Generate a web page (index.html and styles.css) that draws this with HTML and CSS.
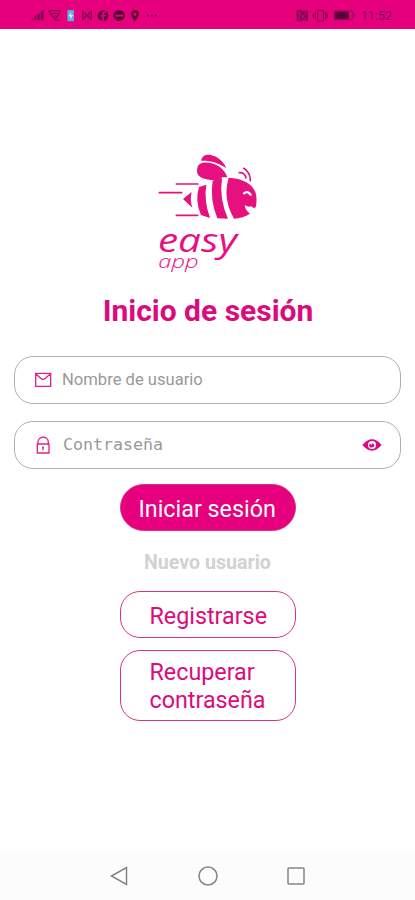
FILE: index.html
```html
<!DOCTYPE html>
<html lang="es">
<head>
<meta charset="utf-8">
<title>Inicio de sesión</title>
<link rel="stylesheet" href="styles.css">
</head>
<body>
<header class="status">
  <svg class="status-left" viewBox="90 20 390 50" width="130" height="16.667">
    <path d="M92 60l8-7v7zM102 60v-9l7-6v15zM112 60V43l7-6v23zM122 60V34l9-7v33z"/>
    <g fill="none" stroke="currentColor" stroke-width="3"><path d="M146 35q18-10 36 0M149 42q15-8 29 0M155 49q9-5 17 0M146 31h34l-15 29z M164 55l14-14M168 60h13"/></g>
    <rect class="battery-fill" x="202" y="29" width="20" height="34" rx="3"/><path class="bolt" d="M214 34l-9 14h7l-2 10 9-14h-7z"/>
    <path fill="none" stroke="currentColor" stroke-width="4" d="M248 60V33l13 13 13-13v27M248 59l13-15 13 15"/>
    <circle class="app-icon" cx="309" cy="46" r="16"/><path class="cut" d="M307 62V49h-6v-5h6v-4q0-8 11-7v5q-6-1-6 3v3h6l-1 5h-5v13z"/>
    <path class="app-icon" d="M358 30c-23 0-23 25-8 30l2 3 6-2c23 0 23-31 0-31z"/><path class="cut" d="M347 43h22v6h-22z"/>
    <path class="app-icon" fill-rule="evenodd" d="M405 29c-16 0-15 16 0 34 15-18 16-34 0-34zm0 8a5 5 0 1 1 0 10 5 5 0 0 1 0-10z"/>
    <g><circle cx="444" cy="46" r="3"/><circle cx="456" cy="46" r="3"/><circle cx="468" cy="46" r="3"/></g>
  </svg>
  <div class="status-right">
    <svg viewBox="273 20 180 50" width="60" height="16.667">
      <path d="M275 30l6-2h22l6 5v30h-8l-5-4-6 4h-15z"/><path fill="none" stroke="#e6007e" stroke-width="3" d="M282 60V34l11 18M290 31h12v11l-9 5 11 15"/>
      <path fill="none" stroke="currentColor" stroke-width="3.5" d="M338 30h17v32h-17zM331 34v24M362 34v24M325 40v12M367 40v12"/>
      <rect class="charge" x="390" y="34" width="42" height="22"/><path fill="none" stroke="currentColor" stroke-width="2.5" d="M388 32h54v26h-54zM448 38v13"/>
    </svg>
    <span class="time">11:52</span>
  </div>
</header>
<main class="login">
  <svg class="logo" viewBox="0 0 375 405" width="125" height="135" role="img" aria-label="easy app">
    <path d="M168 47C173 27 192 26 209 34C226 42 237 53 244 70C221 53 196 46 168 47Z"/>
    <path d="M156 76C157 52 176 49 200 55C222 60 240 76 247 97L231 97L222 109C193 103 155 105 156 76Z"/>
    <path d="M114 162L140 141Q134 165 142 188Z"/>
    <path d="M162 126L184 119Q176 166 195 219L168 210Q149 168 162 126Z"/>
    <path d="M203 107L231 100Q222 163 249 221L217 220Q194 164 203 107Z"/>
    <path d="M251 98C291 100 325 115 333 148Q336 165 333 185L327 190L319 184Q308 188 299 180Q301 196 315 206Q294 219 267 221Q232 160 251 98Z"/>
    <path class="smile" d="M297 145Q307 136 317 149"/>
    <path class="lines" d="M94 117H159M43 143H110M94 211H158"/>
    <path class="antenna" d="M283 83Q299 82 303 99M296 70Q316 82 316 107"/>
    <text class="word-easy" x="39" y="320" textLength="237" lengthAdjust="spacingAndGlyphs">easy</text>
    <text class="word-app" x="40" y="369" textLength="121" lengthAdjust="spacingAndGlyphs">app</text>
  </svg>
  <h1>Inicio de sesión</h1>
  <div class="field">
    <svg class="icon" viewBox="0 0 54 54" width="18" height="18"><path d="M5 7h45v39H5zM6 9l14 13q7 7 14 0L49 9"/></svg>
    <span class="hint">Nombre de usuario</span>
  </div>
  <div class="field">
    <svg class="icon" viewBox="0 0 54 54" width="18" height="18"><path d="M10 24h35v27H10zM12 24v-6c0-19 31-19 31 0v6M27 33v10M24 34h6"/></svg>
    <span class="hint mono">Contraseña</span>
    <svg class="eye" viewBox="0 0 60 36" width="20" height="12"><path d="M1 18Q30-16 59 18Q30 52 1 18Z"/><circle cx="30" cy="18" r="12"/><path d="M30 18L22 13V23Q30 29 37 21Q38 15 31 12Z"/></svg>
  </div>
  <button class="btn primary">Iniciar sesión</button>
  <p>Nuevo usuario</p>
  <button class="btn">Registrarse</button>
  <button class="btn recover">Recuperar<br>contraseña</button>
</main>
<nav>
  <svg viewBox="0 0 20 20" width="20" height="20"><path d="M1.5 10L16.5 1.5v17z"/></svg>
  <svg viewBox="0 0 20 20" width="20" height="20"><circle cx="10" cy="10" r="9"/></svg>
  <svg viewBox="0 0 20 20" width="20" height="20"><rect x="2" y="2" width="16" height="16" rx="1"/></svg>
</nav>
</body>
</html>
```
FILE: styles.css
```css
* { box-sizing: border-box; }
body { margin: 0; width: 415px; height: 900px; display: flex; flex-direction: column; background: #fff; font-family: Roboto, sans-serif; overflow: hidden; }
.status { height: 29px; flex: none; background: #e6007e; color: #850050; display: flex; justify-content: space-between; align-items: flex-start; padding: 6.667px 22px 0 30px; }
.status svg { fill: currentColor; display: block; }
.status .battery-fill { fill: #55aee0; }
.status .bolt { fill: #fff; }
.status .cut { fill: #e6007e; }
.status .charge, .status .app-icon { fill: #5c0038; }
.status-right { display: flex; gap: 5px; }
.time { font-size: 12.5px; line-height: 17px; width: 32px; white-space: nowrap; }
.login { flex: 1; display: flex; flex-direction: column; align-items: center; padding: 116px 14px 0; }
.logo { display: block; flex: none; fill: #e6107f; }
.smile { fill: none; stroke: #fff; stroke-width: 7; stroke-linecap: round; }
.lines { stroke: #e6107f; stroke-width: 5; stroke-linecap: round; }
.antenna { fill: none; stroke: #e6107f; stroke-width: 5; stroke-linecap: round; stroke-dasharray: 14 4; }
.word-easy, .word-app { font-family: "Open Sans", sans-serif; font-style: italic; }
.word-easy { font-size: 99px; }
.word-app { font-size: 55px; font-weight: 300; }
h1 { margin: 13px 0 0 1px; height: 36px; line-height: 36px; font-size: 30px; font-weight: 700; color: #dc0b7d; white-space: nowrap; }
.field { width: 387px; height: 48px; margin-top: 27px; border: 1.5px solid #b0b0b0; border-radius: 19px; padding: 0 18px 0 19px; display: flex; align-items: center; flex: none; }
.field + .field { margin-top: 17px; }
.icon { fill: none; stroke: #dc2489; stroke-width: 4; margin-right: 10px; }
.hint { font-size: 16.6px; line-height: 20px; color: #999; white-space: nowrap; }
.mono { font-family: "DejaVu Sans Mono", monospace; margin-left: 1px; margin-top: -1px; }
.eye { margin-left: auto; fill: #dc0b7d; }
.eye circle { fill: #fff; }
.btn { width: 176px; height: 47px; flex: none; border: 1px solid #d9308d; border-radius: 20px; background: #fff; color: #dc0b7d; font: 400 23.3px/28px Roboto, sans-serif; text-align: left; padding: 3px 0 0 29px; white-space: nowrap; }
.primary { margin-top: 15px; background: #e6007e; color: #fff; border-radius: 24px; padding: 2px 0 0 18px; }
p { margin: 20px 0 16px; height: 24px; line-height: 24px; font-size: 19.6px; font-weight: 700; color: #d2d2d2; white-space: nowrap; }
.recover { height: 71px; margin-top: 12px; padding-top: 1px; }
nav { height: 48px; flex: none; background: #fcfcfc; display: flex; justify-content: center; align-items: center; gap: 68px; }
nav svg { fill: none; stroke: #858585; stroke-width: 1.5; }
```
